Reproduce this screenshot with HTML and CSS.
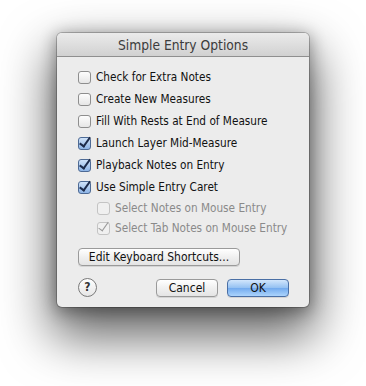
FILE: index.html
```html
<!DOCTYPE html>
<html lang="en">

<head>
  <meta charset="UTF-8">
  <meta name="viewport" content="width=device-width, initial-scale=1.0">
  <link rel="stylesheet" href="styles.css">
  <title>Simple Entry Options</title>
</head>

<body>
  <div class="window">
    <div class="titlebar">Simple Entry Options</div>

    <div class="content">
      <ul class="options">
        <li class="option"><span class="check"></span>Check for Extra Notes</li>
        <li class="option"><span class="check"></span>Create New Measures</li>
        <li class="option"><span class="check"></span>Fill With Rests at End of Measure</li>
        <li class="option"><span class="check on"></span>Launch Layer Mid-Measure</li>
        <li class="option"><span class="check on"></span>Playback Notes on Entry</li>
        <li class="option"><span class="check on"></span>Use Simple Entry Caret</li>
        <li class="option sub disabled"><span class="check"></span>Select Notes on Mouse Entry</li>
        <li class="option sub disabled"><span class="check on"></span>Select Tab Notes on Mouse Entry</li>
      </ul>

      <button class="btn wide">Edit Keyboard Shortcuts...</button>

      <div class="footer">
        <span class="help">?</span>
        <div class="actions">
          <button class="btn">Cancel</button>
          <button class="btn default">OK</button>
        </div>
      </div>
    </div>
  </div>
</body>

</html>
```

FILE: styles.css
```css
html {
  background-color: #fff;
}

body {
  font-family: 'DejaVu Sans Condensed', 'DejaVu Sans', sans-serif;
  font-size: 12px;
  margin: 0;
  padding: 33px 0 0;
  min-height: 386px;
  box-sizing: border-box;
  color: #111;
}

.window {
  width: 252px;
  height: 274px;
  margin: 0 auto;
  background-color: #ececec;
  border-radius: 5px;
  overflow: hidden;
  box-shadow:
    0 0 0 1px rgba(0, 0, 0, 0.22),
    0 3px 16px 2px rgba(0, 0, 0, 0.32),
    0 24px 50px 6px rgba(0, 0, 0, 0.6);
}

.titlebar {
  height: 23px;
  line-height: 24px;
  text-align: center;
  font-size: 13.7px;
  color: #3c3c3c;
  background: linear-gradient(#ebebeb, #d1d1d1);
  border-bottom: 1px solid #8f8f8f;
}

.content {
  padding: 9px 20px 0 21px;
}

.options {
  list-style-type: none;
  margin: 0;
  padding: 0;
  font-size: 11.7px;
}

.option {
  display: flex;
  align-items: center;
  height: 22px;
  white-space: nowrap;
}

.option.sub {
  height: 20px;
  padding-left: 19px;
  color: #8a8a8a;
}

.check {
  position: relative;
  flex-shrink: 0;
  width: 11px;
  height: 11px;
  margin-right: 5px;
  border: 1px solid #8e8e8e;
  border-radius: 3px;
  background: linear-gradient(#fdfdfd, #e6e6e6);
}

.check.on {
  border-color: #4d6a95;
  background: linear-gradient(#cfe2f8, #8db4e6);
}

.check.on::after {
  content: "";
  position: absolute;
  left: 3px;
  top: -3px;
  width: 4px;
  height: 10px;
  border: solid #1d2b4a;
  border-width: 0 2px 2px 0;
  transform: rotate(35deg);
}

.disabled .check {
  border-color: #c4c4c4;
  background: #f0f0f0;
}

.disabled .check.on::after {
  border-color: #9a9a9a;
  border-width: 0 1.5px 1.5px 0;
}

.btn {
  font-family: inherit;
  font-size: 12px;
  height: 18px;
  padding: 0;
  color: #111;
  white-space: nowrap;
  border: 1px solid #9a9a9a;
  border-radius: 4px;
  background: linear-gradient(#ffffff, #f0f0f0 50%, #e4e4e4);
  box-shadow: 0 1px 0 rgba(0, 0, 0, 0.1);
}

.btn.wide {
  display: block;
  width: 162px;
  margin-top: 10px;
}

.footer {
  display: flex;
  align-items: center;
  justify-content: space-between;
  margin-top: 12px;
}

.help {
  width: 17px;
  height: 17px;
  border: 1px solid #7a7a7a;
  border-radius: 50%;
  background: linear-gradient(#ffffff, #e6e6e6);
  text-align: center;
  line-height: 17px;
  font-size: 12px;
  font-weight: bold;
  color: #333;
}

.actions {
  display: flex;
  gap: 9px;
}

.actions .btn {
  width: 62px;
}

.btn.default {
  border-color: #4a6fa5;
  background: linear-gradient(#d2e6fc, #93c0f2 50%, #72aaee 51%, #acd4fc);
}
```
